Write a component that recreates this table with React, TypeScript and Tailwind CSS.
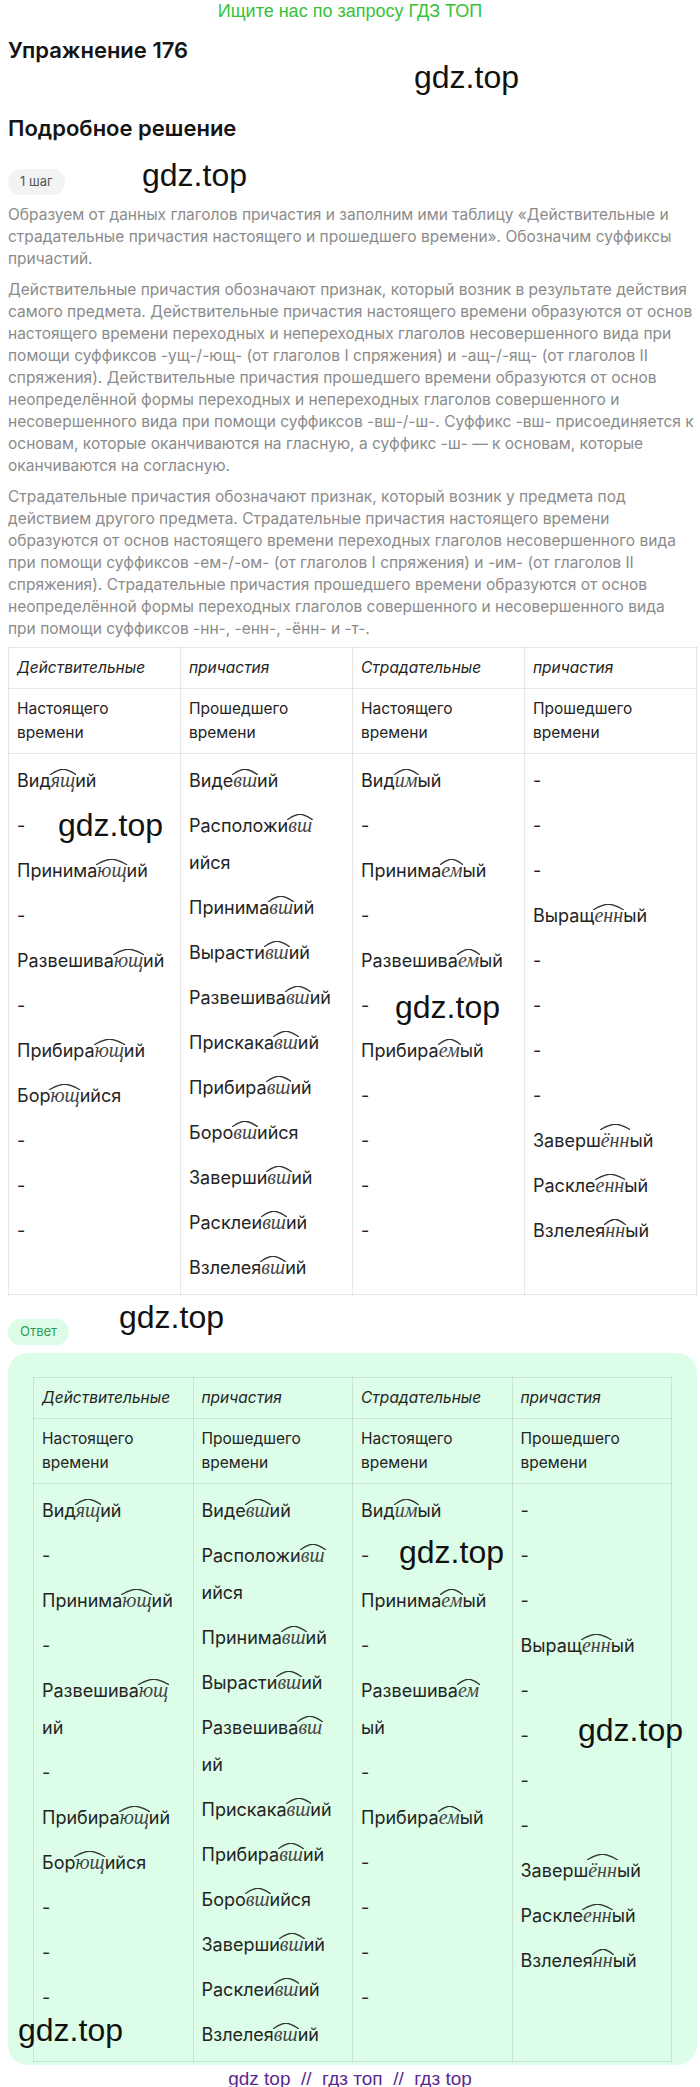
import React from "react";

type Word = { p: string; s: string; a: string; br?: "both" | "ans"; hi?: boolean };
type Item = string | Word;

const W = (p: string, s: string, a: string, br?: "both" | "ans", hi?: boolean): Word => ({ p, s, a, br, hi });

const cols: Item[][] = [
  [W("Вид", "ящ", "ий"), "-", W("Принима", "ющ", "ий"), "-", W("Развешива", "ющ", "ий", "ans"), "-", W("Прибира", "ющ", "ий"), W("Бор", "ющ", "ийся"), "-", "-", "-"],
  [
    W("Виде", "вш", "ий"),
    W("Расположи", "вш", "ийся", "both"),
    W("Принима", "вш", "ий"),
    W("Вырасти", "вш", "ий"),
    W("Развешива", "вш", "ий", "ans"),
    W("Прискака", "вш", "ий"),
    W("Прибира", "вш", "ий"),
    W("Боро", "вш", "ийся"),
    W("Заверши", "вш", "ий"),
    W("Расклеи", "вш", "ий"),
    W("Взлелея", "вш", "ий"),
  ],
  [W("Вид", "им", "ый"), "-", W("Принима", "ем", "ый"), "-", W("Развешива", "ем", "ый", "ans"), "-", W("Прибира", "ем", "ый"), "-", "-", "-", "-"],
  ["-", "-", "-", W("Выращ", "енн", "ый"), "-", "-", "-", "-", W("Заверш", "ённ", "ый", undefined, true), W("Раскле", "енн", "ый"), W("Взлелея", "нн", "ый")],
];

function Suf({ s, hi }: { s: string; hi?: boolean }) {
  return (
    <span className="relative inline-block leading-none font-['Liberation_Serif',serif] italic text-[20px] text-[#444]">
      {s}
      <svg
        className={hi ? "absolute left-[-1px] top-[-6px] w-[calc(100%+2px)] h-[6px]" : "absolute left-[-1px] top-[-1px] w-[calc(100%+2px)] h-[6px]"}
        viewBox="0 0 100 10"
        preserveAspectRatio="none"
      >
        <path d="M0 10 Q22 2 50 0 Q78 2 100 10" fill="none" stroke="#333" strokeWidth="1.3" vectorEffect="non-scaling-stroke" />
      </svg>
    </span>
  );
}

function Cell({ item, answer }: { item: Item; answer?: boolean }) {
  if (typeof item === "string") {
    return <div className="leading-[37px] whitespace-nowrap">{item}</div>;
  }
  const brk = item.br === "both" || (item.br === "ans" && answer);
  return (
    <div className="leading-[37px] whitespace-nowrap">
      {item.p}
      <Suf s={item.s} hi={item.hi} />
      {brk ? <br /> : null}
      {item.a}
    </div>
  );
}

const heads = ["Действительные", "причастия", "Страдательные", "причастия"];
const subs = [
  ["Настоящего", "времени"],
  ["Прошедшего", "времени"],
  ["Настоящего", "времени"],
  ["Прошедшего", "времени"],
];

function PTable({ answer }: { answer?: boolean }) {
  return (
    <table className="w-full table-fixed border-collapse text-[#242424]">
      <tbody>
        <tr>
          {heads.map((h, i) => (
            <td key={i} className="border border-black/[0.09] px-2 py-2 leading-6 text-[15.5px] italic align-top">
              {h}
            </td>
          ))}
        </tr>
        <tr>
          {subs.map((s, i) => (
            <td key={i} className="border border-black/[0.09] px-2 py-2 leading-6 text-[15.5px] align-top">
              {s[0]}
              <br />
              {s[1]}
            </td>
          ))}
        </tr>
        <tr>
          {cols.map((col, i) => (
            <td key={i} className="border border-black/[0.09] px-2 py-2 align-top text-[18px]">
              <div className="flex flex-col gap-2">
                {col.map((it, j) => (
                  <Cell key={j} item={it} answer={answer} />
                ))}
              </div>
            </td>
          ))}
        </tr>
      </tbody>
    </table>
  );
}

function Mark({ className }: { className: string }) {
  return (
    <div className={"absolute font-['Liberation_Sans',Arial,sans-serif] text-[32px] leading-none text-[#111] whitespace-nowrap " + className}>
      gdz.top
    </div>
  );
}

export default function App() {
  return (
    <div className="relative w-[700px] bg-white font-['Inter',sans-serif]">
      <div className="h-[22px] text-center leading-[22px] text-[18px] font-['Liberation_Sans',Arial,sans-serif] text-[#36c236]">
        Ищите нас по запросу ГДЗ ТОП
      </div>
      <div className="pl-2 pr-[3px]">
        <h1 className="mt-[14px] text-[22px] leading-[28px] font-semibold text-[#151515]">Упражнение 176</h1>
        <h2 className="mt-[50px] text-[22px] leading-[28px] font-semibold text-[#151515]">Подробное решение</h2>
        <div className="mt-[27px] inline-flex h-[26px] items-center rounded-full bg-[#f3f3f3] px-3 text-[13px] text-[#555]">1 шаг</div>
        <div className="mt-[9px] text-[15.5px] leading-[22px] text-[#8b8b8b] whitespace-nowrap">
          <p>
            Образуем от данных глаголов причастия и заполним ими таблицу «Действительные и
            <br />
            страдательные причастия настоящего и прошедшего времени». Обозначим суффиксы
            <br />
            причастий.
          </p>
          <p className="mt-[9px]">
            Действительные причастия обозначают признак, который возник в результате действия
            <br />
            самого предмета. Действительные причастия настоящего времени образуются от основ
            <br />
            настоящего времени переходных и непереходных глаголов несовершенного вида при
            <br />
            помощи суффиксов -ущ-/-ющ- (от глаголов I спряжения) и -ащ-/-ящ- (от глаголов II
            <br />
            спряжения). Действительные причастия прошедшего времени образуются от основ
            <br />
            неопределённой формы переходных и непереходных глаголов совершенного и
            <br />
            несовершенного вида при помощи суффиксов -вш-/-ш-. Суффикс -вш- присоединяется к
            <br />
            основам, которые оканчиваются на гласную, а суффикс -ш- — к основам, которые
            <br />
            оканчиваются на согласную.
          </p>
          <p className="mt-[9px]">
            Страдательные причастия обозначают признак, который возник у предмета под
            <br />
            действием другого предмета. Страдательные причастия настоящего времени
            <br />
            образуются от основ настоящего времени переходных глаголов несовершенного вида
            <br />
            при помощи суффиксов -ем-/-ом- (от глаголов I спряжения) и -им- (от глаголов II
            <br />
            спряжения). Страдательные причастия прошедшего времени образуются от основ
            <br />
            неопределённой формы переходных глаголов совершенного и несовершенного вида
            <br />
            при помощи суффиксов -нн-, -енн-, -ённ- и -т-.
          </p>
        </div>
        <div className="mt-[7px]">
          <PTable />
        </div>
        <div className="mt-[24px] inline-flex h-[26px] items-center rounded-full bg-[#dcfce7] px-3 text-[13px] text-[#2e9d52]">Ответ</div>
        <div className="mt-2 rounded-[20px] bg-[#dcfde7] px-[25px] pt-6 pb-[3px]">
          <PTable answer />
        </div>
      </div>
      <div className="h-[27px] text-center leading-[27px] text-[19px] font-['Liberation_Sans',Arial,sans-serif] text-[#5a2a8f]">
        gdz top &nbsp;//&nbsp; гдз топ &nbsp;//&nbsp; гдз top
      </div>

      <Mark className="left-[414px] top-[61px]" />
      <Mark className="left-[142px] top-[159px]" />
      <Mark className="left-[58px] top-[809px]" />
      <Mark className="left-[395px] top-[991px]" />
      <Mark className="left-[119px] top-[1301px]" />
      <Mark className="left-[399px] top-[1536px]" />
      <Mark className="left-[578px] top-[1714px]" />
      <Mark className="left-[18px] top-[2014px]" />
    </div>
  );
}
